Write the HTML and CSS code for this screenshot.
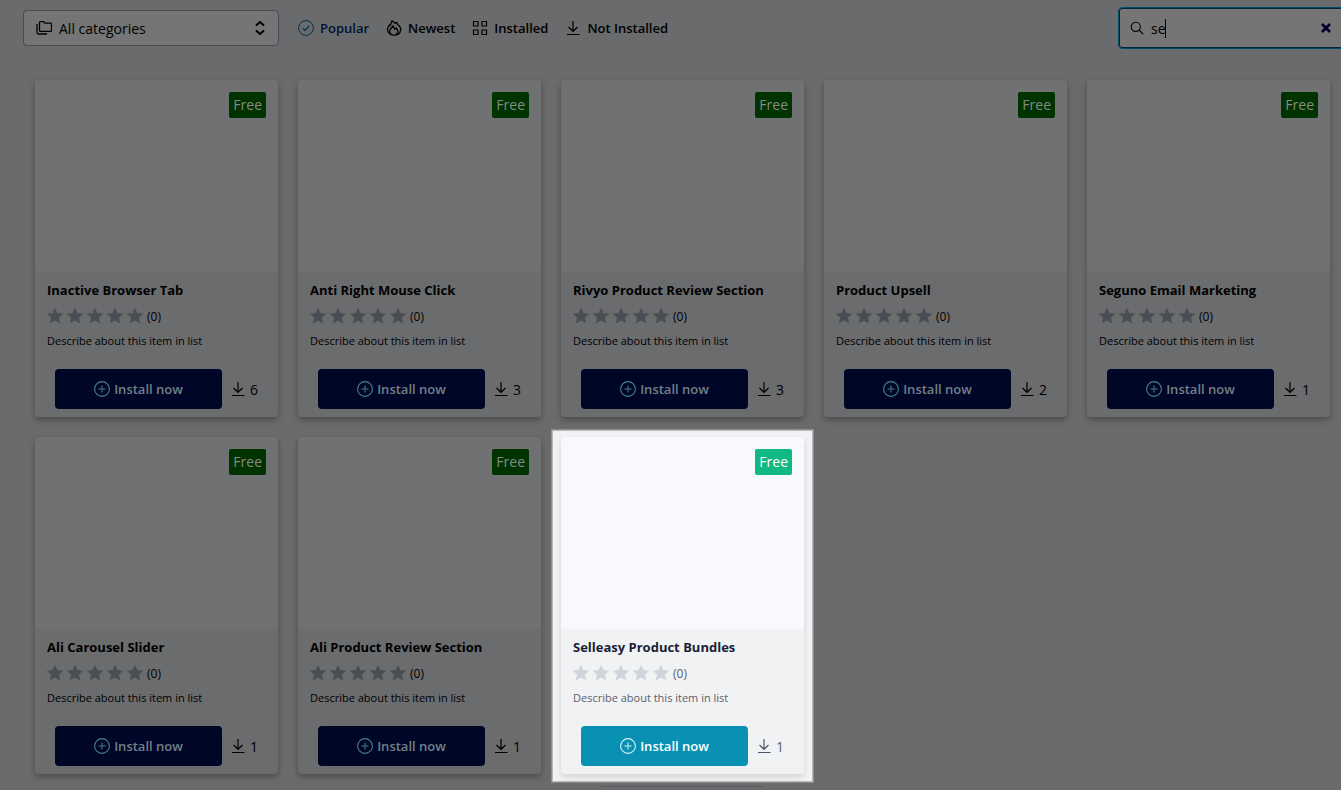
FILE: index.html
```html
<!DOCTYPE html>
<html lang="en">
<head>
    <meta charset="UTF-8">
    <meta name="viewport" content="width=device-width, initial-scale=1.0">
    <title>Plugins</title>
    <link rel="stylesheet" href="styles.css">
</head>
<body>
    <!-- shared icons -->
    <svg class="sprite" aria-hidden="true">
        <symbol id="star" viewBox="0 0 20 20">
            <path fill="currentColor" d="M10 1.8l2.4 5.3 5.9.6-4.4 3.9 1.3 5.8L10 14.4l-5.2 3 1.3-5.8L1.7 7.700l5.900-.6z"/>
        </symbol>
        <symbol id="stars" viewBox="0 0 100 20">
            <use href="#star" x="0" width="20" height="20"/>
            <use href="#star" x="20" width="20" height="20"/>
            <use href="#star" x="40" width="20" height="20"/>
            <use href="#star" x="60" width="20" height="20"/>
            <use href="#star" x="80" width="20" height="20"/>
        </symbol>
        <symbol id="plus" viewBox="0 0 16 16">
            <circle cx="8" cy="8" r="7.400" fill="none" stroke="currentColor" stroke-width="1.1"/>
            <path d="M8 4.500v7M4.500 8h7" fill="none" stroke="currentColor" stroke-width="1.500" opacity=".7"/>
        </symbol>
        <symbol id="download" viewBox="0 0 16 16">
            <path d="M8 1v10M3.500 7L8 11.300 12.500 7M2 14.500h12.500" fill="none" stroke="currentColor" stroke-width="1.200"/>
        </symbol>
    </svg>

    <header class="toolbar">
        <div class="category">
            <svg class="category-icon" viewBox="0 0 16 14" aria-hidden="true">
                <path d="M3.500 1.500q0-.8.8-.8h3.200l1.500 1.500h5.700q.8 0 .8.800v6.500q0 .8-.8.800H4.300q-.8 0-.8-.8zM1 3v8.500q0 1.500 1.500 1.500H11" fill="none" stroke="currentColor" stroke-width="1.3" stroke-linejoin="round"/>
            </svg>
            <select class="category-select" aria-label="Category">
                <option>All categories</option>
            </select>
            <svg class="category-arrows" viewBox="0 0 10 16" aria-hidden="true">
                <path d="M1 5.500L5 2l4 3.500M1 10.500L5 14l4-3.500" fill="none" stroke="currentColor" stroke-width="2"/>
            </svg>
        </div>

        <nav class="filters">
            <a href="#" class="filter active">
                <svg viewBox="0 0 16 16" aria-hidden="true">
                    <circle cx="8" cy="8" r="7.400" fill="none" stroke="currentColor"/>
                    <path d="M4.800 8.200L7 10.300l4.300-4.300" fill="none" stroke="currentColor" stroke-width="1.2"/>
                </svg>
                Popular
            </a>
            <a href="#" class="filter">
                <svg viewBox="0 0 16 16" aria-hidden="true">
                    <path d="M6 .8l3 2.400 1.500-.8 1.500 2.600 1 .5c1.400 1.500 1.900 3 1.700 4.700-.5 3-3 5-6.500 5s-6.600-2-6.700-5.500c0-2 .7-3.200 2-4.700l.7.500z" fill="none" stroke="currentColor" stroke-width="1.3" stroke-linejoin="round"/>
                    <path d="M5.500 14.500c-2-1.500-2.500-3-1.500-4.800L7 6l2 3.500 1.500-1.500 1.500 3c0 1.500-.7 2.700-2 3.500" fill="none" stroke="currentColor" stroke-width="1.3"/>
                </svg>
                Newest
            </a>
            <a href="#" class="filter">
                <svg viewBox="0 0 16 16" aria-hidden="true">
                    <path d="M1.500 1.500H6V6H1.500zM10 1.500h4.500V6H10zM1.500 10H6v4.500H1.500zM10 10h4.500v4.500H10z" fill="none" stroke="currentColor" stroke-width="1.200"/>
                </svg>
                Installed
            </a>
            <a href="#" class="filter">
                <svg aria-hidden="true"><use href="#download"/></svg>
                Not Installed
            </a>
        </nav>

        <form class="search" role="search">
            <svg class="search-icon" viewBox="0 0 14 14" aria-hidden="true">
                <circle cx="5.800" cy="5.800" r="4.600" fill="none" stroke="currentColor" stroke-width="1.1"/>
                <path d="M9.200 9.200l4 4" stroke="currentColor" stroke-width="1.200"/>
            </svg>
            <input class="search-input" type="text" value="se" aria-label="Search">
            <span class="caret"></span>
            <button class="search-clear" type="button" aria-label="Clear search">
                <svg viewBox="0 0 10 10" aria-hidden="true"><path d="M1 1l8 8M9 1L1 9" stroke="currentColor" stroke-width="2.600"/></svg>
            </button>
        </form>
    </header>

    <main>
        <ul class="plugins" id="plugins"></ul>
        <div class="pager"></div>
    </main>

    <script>
        const plugins = [
            { name: 'Inactive Browser Tab', installs: 6 },
            { name: 'Anti Right Mouse Click', installs: 3 },
            { name: 'Rivyo Product Review Section', installs: 3 },
            { name: 'Product Upsell', installs: 2 },
            { name: 'Seguno Email Marketing', installs: 1 },
            { name: 'Ali Carousel Slider', installs: 1 },
            { name: 'Ali Product Review Section', installs: 1 },
            { name: 'Selleasy Product Bundles', installs: 1, spotlight: true }
        ];

        let html = '';
        for (const plugin of plugins) {
            html += `<li class="item${plugin.spotlight ? ' spotlight' : ''}">
                <article class="card">
                    <div class="thumb"><span class="badge">Free</span></div>
                    <div class="info">
                        <h2 class="name">${plugin.name}</h2>
                        <div class="rating"><svg class="stars" aria-hidden="true"><use href="#stars"/></svg>(0)</div>
                        <p class="description">Describe about this item in list</p>
                    </div>
                    <div class="actions">
                        <button class="install" type="button"><svg aria-hidden="true"><use href="#plus"/></svg>Install now</button>
                        <span class="count"><svg aria-hidden="true"><use href="#download"/></svg>${plugin.installs}</span>
                    </div>
                </article>
            </li>`;
        }
        document.getElementById('plugins').innerHTML = html;
    </script>
</body>
</html>
```

FILE: styles.css
```css
* {
    box-sizing: border-box;
}

body {
    /* dimmed page colours, .spotlight puts the bright ones back */
    --surface: #6b6c6e;
    --thumb: #707173;
    --title: #000;
    --text: #000;
    --star: #4b4d55;
    --badge: #003300;
    --badge-text: #858a85;
    --button: #000628;
    --button-text: #728087;
    --button-icon: #48808d;
    --download: #000;

    margin: 0;
    overflow-x: hidden;
    background-color: #6a6b6d;
    color: #000;
    font-family: "Segoe UI", "Open Sans", "Noto Sans", sans-serif;
    font-size: 14px;
}

svg {
    display: block;
    flex-shrink: 0;
}

.sprite {
    position: absolute;
    width: 0;
    height: 0;
}

.toolbar {
    display: flex;
    align-items: center;
    height: 56px;
    padding-left: 23px;
}

.category {
    position: relative;
    width: 256px;
    height: 36px;
}

.category-select {
    appearance: none;
    width: 100%;
    height: 100%;
    padding: 0 35px;
    border: 1px solid #474a53;
    border-radius: 4px;
    background-color: #757575;
    color: #000;
    font: inherit;
}

.category-icon,
.category-arrows {
    position: absolute;
    pointer-events: none;
}

.category-icon {
    left: 13px;
    top: 11px;
    width: 16px;
    height: 14px;
}

.category-arrows {
    right: 14px;
    top: 10px;
    width: 10px;
    height: 16px;
}

.filters {
    display: flex;
    gap: 17px;
    margin-left: 19px;
}

.filter {
    display: flex;
    align-items: center;
    gap: 6px;
    color: #000;
    font-size: 13px;
    font-weight: 600;
    text-decoration: none;
}

.filter svg {
    width: 16px;
    height: 16px;
}

.filter.active {
    color: #001234;
}

.filter.active svg {
    color: #003550;
}

.search {
    position: relative;
    display: flex;
    align-items: center;
    width: 231px;
    height: 42px;
    margin-left: auto;
    margin-right: -8px;
    padding: 0 17px 0 11px;
    border: 1px solid #004f66;
    border-radius: 4px;
    background-color: #757575;
    box-shadow: inset 0 0 0 1px #00253c;
}

.search-icon {
    width: 14px;
    height: 14px;
}

.search-input {
    flex: 1;
    min-width: 0;
    height: 32px;
    padding: 0 0 0 7px;
    border: 0;
    outline: 0;
    background: none;
    color: #000;
    font: inherit;
}

.caret {
    position: absolute;
    left: 46px;
    top: 11px;
    width: 1px;
    height: 19px;
    background-color: #000;
}

.search-clear {
    padding: 0;
    border: 0;
    background: none;
    color: #00002d;
}

.search-clear svg {
    width: 10px;
    height: 10px;
}

.plugins {
    display: grid;
    grid-template-columns: repeat(5, 1fr);
    gap: 20px;
    margin: 0;
    padding: 24px 11px 0 35px;
    list-style: none;
}

.item {
    position: relative;
}

.card {
    position: relative;
    border-radius: 4px;
    background-color: var(--surface);
    box-shadow: 0 3px 6px rgba(0, 0, 0, 0.3);
}

.thumb {
    display: flex;
    justify-content: flex-end;
    align-items: flex-start;
    height: 192px;
    padding: 12px;
    border-radius: 4px;
    background-color: var(--thumb);
}

.badge {
    padding: 0 4px;
    border-radius: 2px;
    background-color: var(--badge);
    color: var(--badge-text);
    line-height: 26px;
}

.info {
    padding: 8px 12px 0;
}

.name {
    margin: 0;
    color: var(--title);
    font-size: 13px;
    font-weight: 700;
    line-height: 20px;
}

.rating {
    display: flex;
    align-items: center;
    height: 32px;
    color: var(--text);
    font-size: 12px;
}

.stars {
    width: 100px;
    height: 20px;
    margin-left: -2px;
    margin-right: 2px;
    color: var(--star);
}

.description {
    margin: 0;
    color: var(--text);
    font-size: 11px;
    line-height: 18px;
}

.actions {
    display: flex;
    align-items: center;
    gap: 8px;
    padding: 19px 20px 8px;
}

.install {
    display: flex;
    flex: 1;
    align-items: center;
    justify-content: center;
    gap: 4px;
    height: 40px;
    padding: 0;
    border: 0;
    border-radius: 4px;
    background-color: var(--button);
    color: var(--button-text);
    font: inherit;
    font-size: 13px;
    font-weight: 600;
    cursor: pointer;
}

.install svg {
    width: 16px;
    height: 16px;
    color: var(--button-icon);
}

.count {
    display: flex;
    align-items: center;
    gap: 4px;
    color: var(--text);
}

.count svg {
    width: 16px;
    height: 16px;
    color: var(--download);
}

.spotlight {
    --surface: #f1f2f4;
    --thumb: #f8f9fc;
    --title: #1a1f36;
    --text: #5d6068;
    --star: #d0d3db;
    --badge: #10b981;
    --badge-text: #fff;
    --button: #0891b2;
    --button-text: #fff;
    --button-icon: #d5f1f8;
    --download: #4f566b;
}

.spotlight::before {
    content: "";
    position: absolute;
    inset: -7px -9px -8px;
    border: 1px solid #b5b6b7;
    background-color: #f1f2f4;
    box-shadow: 0 0 0 1px #8e8f90;
}

.spotlight .card {
    box-shadow: 0 3px 6px rgba(0, 0, 0, 0.12);
}

.pager {
    width: 162px;
    height: 1px;
    margin: 12px auto 0;
    position: relative;
    right: -12px;
    background-color: #5c5d64;
}
```
